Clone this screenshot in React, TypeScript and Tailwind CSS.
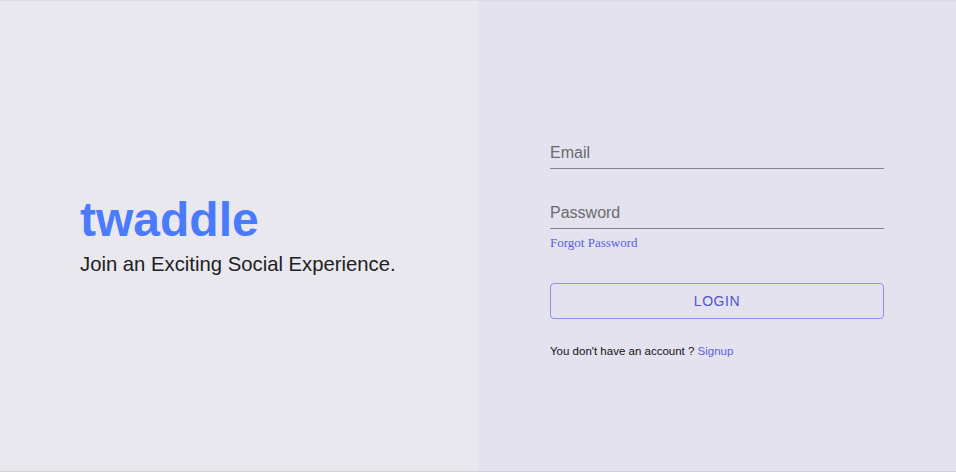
import React from 'react';

const App: React.FC = () => {
  return (
    <div className="flex h-[472px] w-full border-t border-b border-t-[#dcdbe3] border-b-[#d2d2d6] font-['Liberation_Sans',Arial,sans-serif]">
      {/* Brand side */}
      <div className="flex w-1/2 flex-col justify-center bg-[#e9e8ef] pl-20 pt-[2px]">
        <h1 className="text-[48px] font-bold leading-[48px] text-[#4b7bfd]">twaddle</h1>
        <p className="mt-[6px] text-[20.3px] leading-[28px] text-[#212121]">Join an Exciting Social Experience.</p>
      </div>

      {/* Login form */}
      <div className="flex w-1/2 items-center bg-[#e4e2ef] pl-[72px]">
        <form className="flex w-[334px] flex-col pt-[26px]" onSubmit={(e) => e.preventDefault()}>
          <input
            type="email"
            placeholder="Email"
            className="h-[30px] border-b border-[#858389] bg-transparent pb-[1px] text-[16px] text-[#333] outline-none placeholder:text-[#6b6b6b]"
          />
          <input
            type="password"
            placeholder="Password"
            className="mt-[30px] h-[30px] border-b border-[#858389] bg-transparent pb-[1px] text-[16px] text-[#333] outline-none placeholder:text-[#6b6b6b]"
          />
          <a href="#" className="mt-[6px] self-start font-['Liberation_Serif',serif] text-[13px] leading-[16px] text-[#5a5fe0]">
            Forgot Password
          </a>
          <button
            type="submit"
            className="mt-[32px] h-[36px] rounded-[4px] border border-[#8c90ee] text-[14px] tracking-[0.04em] text-[#4f55cf]"
          >
            LOGIN
          </button>
          <p className="mt-[24px] text-[11.5px] leading-[16px] text-[#111]">
            You don't have an account ? <a href="#" className="text-[#5a5fe0]">Signup</a>
          </p>
        </form>
      </div>
    </div>
  );
};

export default App;
